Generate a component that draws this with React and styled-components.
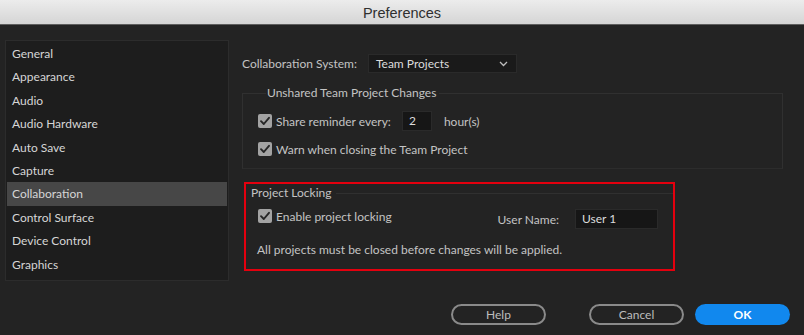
import React from 'react';
import styled, { createGlobalStyle } from 'styled-components';

const GlobalStyle = createGlobalStyle`
  html, body {
    margin: 0;
    padding: 0;
    background: #232323;
  }
  * {
    box-sizing: border-box;
  }
`;

const SIDEBAR_ITEMS = [
  'General',
  'Appearance',
  'Audio',
  'Audio Hardware',
  'Auto Save',
  'Capture',
  'Collaboration',
  'Control Surface',
  'Device Control',
  'Graphics',
];

const CheckIcon = () => (
  <svg width="14" height="14" viewBox="0 0 14 14">
    <path d="M3 7.2 L5.8 10 L11 3.8" fill="none" stroke="#262626" strokeWidth="1.9" strokeLinecap="round" strokeLinejoin="round" />
  </svg>
);

const Chevron = () => (
  <svg width="9" height="6" viewBox="0 0 9 6">
    <path d="M1 1 L4.5 4.5 L8 1" fill="none" stroke="#bdbdbd" strokeWidth="1.3" />
  </svg>
);

const Check = ({ label }) => (
  <CheckRow>
    <Box>
      <CheckIcon />
    </Box>
    <span>{label}</span>
  </CheckRow>
);

const App = () => {
  return (
    <>
      <GlobalStyle />
      <Window>
        <TitleBar>Preferences</TitleBar>
        <Body>
          <Top>
            <Sidebar>
              {SIDEBAR_ITEMS.map((item) => (
                <Item key={item} $active={item === 'Collaboration'}>
                  {item}
                </Item>
              ))}
            </Sidebar>
            <Main>
              <SystemRow>
                <Label>Collaboration System:</Label>
                <Select>
                  <span>Team Projects</span>
                  <Chevron />
                </Select>
              </SystemRow>
              <Group>
                <Legend>Unshared Team Project Changes</Legend>
                <Line>
                  <Check label="Share reminder every:" />
                  <HoursInput>2</HoursInput>
                  <Label>hour(s)</Label>
                </Line>
                <Line $gap>
                  <Check label="Warn when closing the Team Project" />
                </Line>
              </Group>
              <Highlight>
                <LockHeader>Project Locking</LockHeader>
                <LockRow>
                  <Check label="Enable project locking" />
                  <UserField>
                    <Label>User Name:</Label>
                    <NameInput>User 1</NameInput>
                  </UserField>
                </LockRow>
                <Note>All projects must be closed before changes will be applied.</Note>
              </Highlight>
            </Main>
          </Top>
          <Footer>
            <Button>Help</Button>
            <Button $push>Cancel</Button>
            <Button $primary>OK</Button>
          </Footer>
        </Body>
      </Window>
    </>
  );
};

export default App;

const Window = styled.div`
  width: 804px;
  height: 335px;
  display: flex;
  flex-direction: column;
  background: #232323;
  font-family: Lato, 'Open Sans', sans-serif;
  color: #c4c4c4;
  overflow: hidden;
`;

const TitleBar = styled.div`
  height: 25px;
  flex: none;
  display: flex;
  align-items: center;
  justify-content: center;
  background: linear-gradient(#ececec, #d5d5d5);
  border-bottom: 1px solid #5e5e5e;
  font-family: 'Liberation Sans', Arial, sans-serif;
  font-size: 14.5px;
  color: #2f2f2f;
  padding-top: 1px;
`;

const Body = styled.div`
  flex: 1;
  display: flex;
  flex-direction: column;
`;

const Top = styled.div`
  display: flex;
  padding-top: 15px;
`;

const Sidebar = styled.div`
  width: 224px;
  height: 241px;
  margin-left: 5px;
  padding: 1px 1px 0;
  background: #1d1d1d;
  border: 1px solid #2c2c2c;
`;

const Item = styled.div`
  height: 23.4px;
  line-height: 24px;
  padding-left: 5px;
  font-size: 12px;
  color: #d6d6d6;
  background: ${(p) => (p.$active ? '#474747' : 'transparent')};
`;

const Main = styled.div`
  flex: 1;
  padding-left: 13px;
  display: flex;
  flex-direction: column;
`;

const Label = styled.span`
  font-size: 12px;
  color: #c4c4c4;
  white-space: nowrap;
`;

const SystemRow = styled.div`
  display: flex;
  align-items: center;
  height: 19px;
  margin-top: 14px;
  gap: 10px;
`;

const Select = styled.div`
  width: 149px;
  height: 19px;
  margin-left: 1px;
  display: flex;
  align-items: center;
  justify-content: space-between;
  padding: 0 8px 0 7px;
  background: #1a1a1a;
  border: 1px solid #2a2a2a;
  font-size: 12px;
  color: #dcdcdc;
`;

const Group = styled.fieldset`
  width: 541px;
  margin: 12px 0 0;
  padding: 9px 0 8px 15px;
  border: 1px solid #303030;
  border-bottom-color: #2c2c2c;
`;

const Legend = styled.legend`
  margin-left: 8px;
  padding: 0 3px 0 1px;
  font-size: 12px;
  line-height: 16px;
  color: #c4c4c4;
`;

const Line = styled.div`
  display: flex;
  align-items: center;
  height: 22px;
  margin-top: ${(p) => (p.$gap ? '6px' : '0')};
`;

const CheckRow = styled.div`
  display: flex;
  align-items: center;
  gap: 4px;
  font-size: 12px;
  color: #c4c4c4;
  white-space: nowrap;
`;

const Box = styled.div`
  width: 14px;
  height: 14px;
  border-radius: 2px;
  background: #a3a3a3;
  display: flex;
  align-items: center;
  justify-content: center;
`;

const HoursInput = styled.div`
  width: 30px;
  height: 20px;
  margin: 0 12px 0 11px;
  padding-left: 6px;
  line-height: 18px;
  background: #161616;
  border: 1px solid #2a2a2a;
  font-size: 12px;
  color: #dcdcdc;
`;

const Highlight = styled.div`
  width: 431px;
  height: 89px;
  margin: 13px 0 0 2px;
  border: 2px solid #e4000e;
  padding: 2px 15px 0 5px;
  display: flex;
  flex-direction: column;
`;

const LockHeader = styled.div`
  display: flex;
  align-items: center;
  gap: 4px;
  font-size: 12px;
  line-height: 13px;
  margin-right: -15px;
  color: #c4c4c4;

  &::after {
    content: '';
    flex: 1;
    height: 1px;
    margin-top: 2px;
    background: #303030;
  }
`;

const LockRow = styled.div`
  display: flex;
  justify-content: space-between;
  align-items: flex-start;
  margin-top: 6px;
  padding-left: 7px;

  & > ${CheckRow} {
    height: 22px;
  }
`;

const UserField = styled.div`
  display: flex;
  align-items: center;
  gap: 16px;
  margin-top: 4px;
`;

const NameInput = styled.div`
  width: 83px;
  height: 20px;
  padding-left: 6px;
  line-height: 18px;
  background: #161616;
  border: 1px solid #2a2a2a;
  font-size: 12px;
  color: #dcdcdc;
`;

const Note = styled.div`
  margin-top: 13px;
  padding-left: 6px;
  font-size: 12px;
  line-height: 16px;
  color: #c4c4c4;
`;

const Footer = styled.div`
  margin-top: auto;
  display: flex;
  justify-content: flex-end;
  padding: 0 14px 10px 0;
`;

const Button = styled.button`
  width: 95px;
  height: 21px;
  margin-left: ${(p) => (p.$push ? '43px' : p.$primary ? '11px' : '0')};
  border-radius: 11px;
  border: ${(p) => (p.$primary ? 'none' : '2px solid #8a8a8a')};
  background: ${(p) => (p.$primary ? '#1188ee' : 'transparent')};
  color: ${(p) => (p.$primary ? '#ffffff' : '#bdbdbd')};
  font-family: Lato, 'Open Sans', sans-serif;
  font-size: 12px;
  font-weight: ${(p) => (p.$primary ? 700 : 400)};
  padding: 0;
  cursor: pointer;
`;
